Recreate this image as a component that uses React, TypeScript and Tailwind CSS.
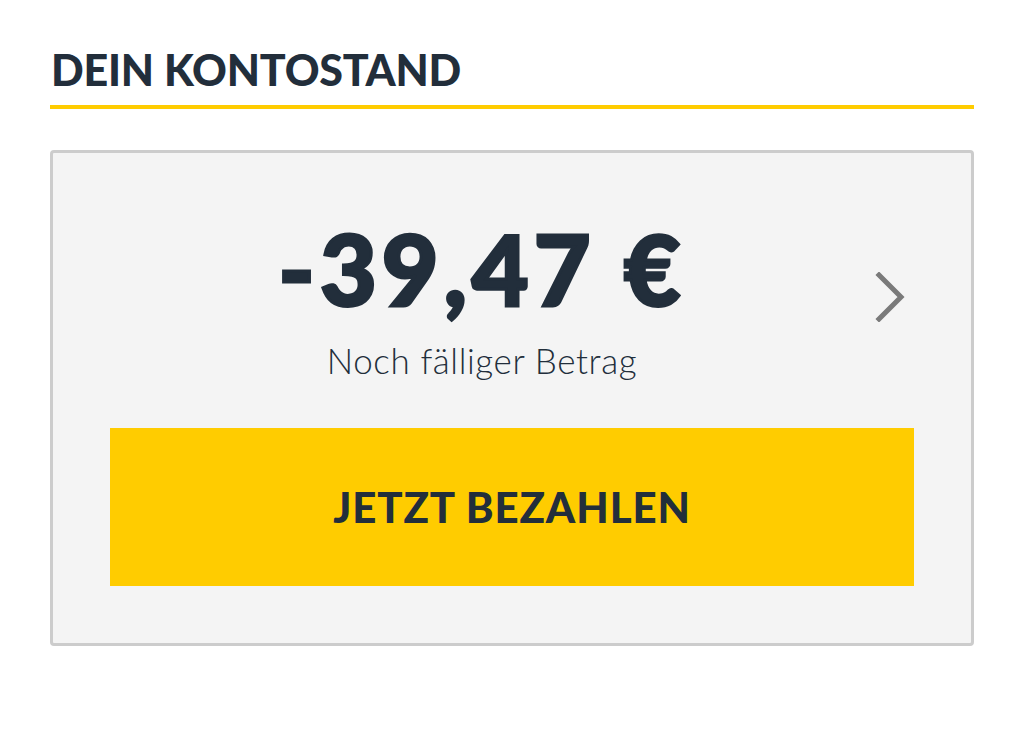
import React from 'react';

export default function App() {
  return (
    <div className="w-[1024px] h-[741px] bg-white px-[50px] pt-[44px] font-['Lato',sans-serif] text-[#222e3b]">
      <h2 className="text-[43px] leading-[52px] font-black tracking-[-0.2px] pl-[1px]">DEIN KONTOSTAND</h2>
      <div className="mt-[9px] h-[4px] bg-[#ffcc00]" />

      <div className="mt-[41px] border-[3px] border-[#cccccc] rounded-[4px] bg-[#f4f4f4] px-[57px] pt-[65px] pb-[57px]">
        <div className="flex items-center">
          <div className="flex-1 flex flex-col items-center">
            <div className="text-[98px] leading-[100px] font-black tracking-[5px] [-webkit-text-stroke:3px_#222e3b]">-39,47 €</div>
            <div className="mt-[20px] text-[35px] leading-[44px] font-light tracking-[0.6px]">Noch fälliger Betrag</div>
          </div>
          <div className="w-[60px] flex justify-end pr-[8px] pb-[6px]">
            <svg width="32" height="50" viewBox="0 0 32 50" fill="none">
              <path d="M5 3 L27 25 L5 47" stroke="#7a7a7a" strokeWidth="5" strokeLinecap="square" strokeLinejoin="miter" />
            </svg>
          </div>
        </div>

        <button className="mt-[46px] w-full h-[158px] bg-[#ffcc00] flex items-center justify-center text-[42px] font-black tracking-[0.9px] text-[#222e3b]">
          JETZT BEZAHLEN
        </button>
      </div>
    </div>
  );
}
